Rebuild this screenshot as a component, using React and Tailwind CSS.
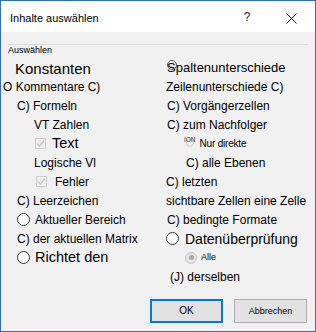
import React from 'react';

const font = { fontFamily: '"Liberation Sans", Arial, sans-serif' };

const Radio = ({ className = '' }) => (
  <span className={`block shrink-0 w-[13px] h-[13px] rounded-full border border-[#333] bg-white ${className}`} />
);

const Check = ({ className = '' }) => (
  <span className={`flex items-center justify-center shrink-0 w-[11px] h-[11px] border border-[#cccccc] ${className}`}>
    <svg width="9" height="9" viewBox="0 0 9 9">
      <polyline points="1,4.5 3.5,7 8,1.5" fill="none" stroke="#c2c2c2" strokeWidth="1.2" />
    </svg>
  </span>
);

const Row = ({ className = '', children }) => (
  <div className={`flex items-center h-[19px] whitespace-nowrap text-[12px] leading-none ${className}`}>{children}</div>
);

export default function App() {
  return (
    <div style={font} className="w-[316px] h-[332px] flex flex-col border border-[#2f6fb8] bg-[#f0f0f0] text-black overflow-hidden">
      {/* title bar */}
      <div className="h-[31px] bg-white flex items-start pt-[11px] pl-[9px] shrink-0">
        <span className="text-[11px] leading-[12px]">Inhalte auswählen</span>
        <span className="ml-[145px] -mt-[1px] text-[12px] leading-[12px] text-[#222]">?</span>
        <svg className="ml-[36px] mt-[1px]" width="11" height="11" viewBox="0 0 11 11">
          <path d="M0.5 0.5 L10.5 10.5 M10.5 0.5 L0.5 10.5" stroke="#111" strokeWidth="1" />
        </svg>
      </div>

      {/* group box */}
      <div className="mt-[12px] mx-[7px] border-t border-[#dadada]">
        <span className="block text-[9px] leading-[10px]">Auswählen</span>
      </div>

      <div className="mt-[3px] flex">
        <div className="w-[165px] shrink-0 flex flex-col">
          <Row className="pl-[14px] pt-[2px] text-[15px]">Konstanten</Row>
          <Row className="pl-[2px]">O Kommentare C)</Row>
          <Row className="pl-[16px]">C) Formeln</Row>
          <Row className="pl-[33px]">VT Zahlen</Row>
          <Row className="pl-[34px]">
            <Check />
            <span className="ml-[6px] text-[14.5px]">Text</span>
          </Row>
          <Row className="pl-[33px]">Logische Vl</Row>
          <Row className="pl-[35px]">
            <Check />
            <span className="ml-[8px]">Fehler</span>
          </Row>
          <Row className="pl-[16px]">C) Leerzeichen</Row>
          <Row className="pl-[16px]">
            <Radio />
            <span className="ml-[5px]">Aktueller Bereich</span>
          </Row>
          <Row className="pl-[16px]">C) der aktuellen Matrix</Row>
          <Row className="pl-[16px]">
            <Radio />
            <span className="ml-[5px] text-[14.5px]">Richtet den</span>
          </Row>
        </div>

        <div className="flex-1 flex flex-col">
          <Row className="pl-[1px] relative text-[13px]">
            <span className="absolute left-[1px] top-[2px] w-[10px] h-[10px] rounded-full border border-[#555]" />
            Spaltenunterschiede
          </Row>
          <Row>Zeilenunterschiede C)</Row>
          <Row className="pl-[1px]">C) Vorgängerzellen</Row>
          <Row className="pl-[1px]">C) zum Nachfolger</Row>
          <Row className="pl-[18px] relative">
            <span className="absolute left-[20px] top-[5px] w-[8px] h-[8px] rounded-full border border-[#c8c8c8]" />
            <span className="relative self-start mt-[3px] text-[6.5px] text-[#333]">ION</span>
            <span className="ml-[4px] text-[10px] tracking-[-0.2px]">Nur direkte</span>
          </Row>
          <Row className="pl-[20px]">C) alle Ebenen</Row>
          <Row>C) letzten</Row>
          <Row>sichtbare Zellen eine Zelle</Row>
          <Row className="pl-[1px]">C) bedingte Formate</Row>
          <Row>
            <Radio />
            <span className="ml-[6px] text-[14px]">Datenüberprüfung</span>
          </Row>
          <Row className="pl-[19px]">
            <span className="flex items-center justify-center shrink-0 w-[12px] h-[12px] rounded-full border border-[#c4c4c4] bg-[#e6e6e6]">
              <span className="block w-[5px] h-[5px] rounded-full bg-[#a8a8a8]" />
            </span>
            <span className="ml-[4px] text-[9px]">Alle</span>
          </Row>
          <Row className="pl-[4px]">(J) derselben</Row>
        </div>
      </div>

      {/* buttons */}
      <div className="mt-[13px] flex justify-end gap-[11px] pr-[8px]">
        <button className="w-[73px] h-[24px] border-2 border-[#0078d7] bg-[#e1e1e1] text-[10px] leading-none">OK</button>
        <button className="w-[73px] h-[24px] border border-[#adadad] bg-[#e1e1e1] text-[9px] leading-none">Abbrechen</button>
      </div>
    </div>
  );
}
